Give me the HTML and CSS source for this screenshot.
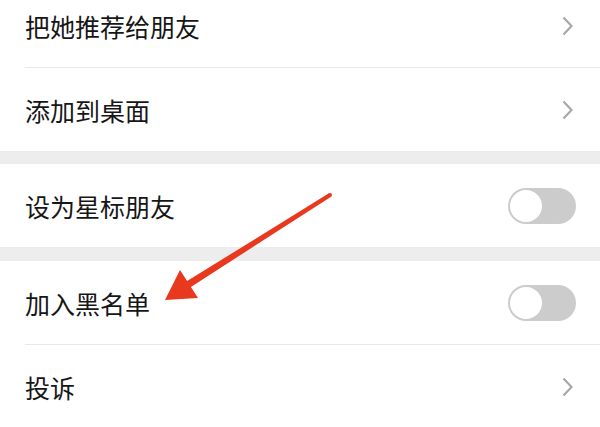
FILE: index.html
```html
<!DOCTYPE html>
<html lang="zh-CN">
<head>
<meta charset="utf-8">
<link rel="stylesheet" href="styles.css">
</head>
<body>
<div class="page">
  <div class="group">
    <div class="row first"><span class="label">把她推荐给朋友</span><svg class="chev" viewBox="0 0 11 20"><path d="M1.5 1.5 L9.5 10 L1.5 18.5" fill="none" stroke="#a8a8a8" stroke-width="2.2"/></svg></div>
    <div class="row divided"><span class="label">添加到桌面</span><svg class="chev" viewBox="0 0 11 20"><path d="M1.5 1.5 L9.5 10 L1.5 18.5" fill="none" stroke="#a8a8a8" stroke-width="2.2"/></svg></div>
  </div>
  <div class="band"></div>
  <div class="group">
    <div class="row"><span class="label">设为星标朋友</span><span class="toggle"><span class="knob"></span></span></div>
  </div>
  <div class="band b2"></div>
  <div class="group">
    <div class="row"><span class="label">加入黑名单</span><span class="toggle"><span class="knob"></span></span></div>
    <div class="row divided"><span class="label">投诉</span><svg class="chev" viewBox="0 0 11 20"><path d="M1.5 1.5 L9.5 10 L1.5 18.5" fill="none" stroke="#a8a8a8" stroke-width="2.2"/></svg></div>
  </div>
  <svg class="arrow" viewBox="0 0 600 427" width="600" height="427">
    <polygon fill="#e8381e" points="328.9,193.3 187.1,281.1 180,270 165,300 198,298 190.9,286.9 331.1,196.7"/>
    <circle cx="330" cy="195" r="2" fill="#e8381e"/>
  </svg>
</div>
</body>
</html>
```

FILE: styles.css
```css
html, body {
  margin: 0;
  padding: 0;
  background: #ffffff;
}
body {
  width: 600px;
  height: 427px;
  overflow: hidden;
  font-family: "Noto Sans CJK SC", "Noto Sans", sans-serif;
}
.page {
  position: relative;
  margin-top: -15px;
}
.group {
  background: #ffffff;
}
.row {
  height: 83px;
  display: flex;
  align-items: center;
  justify-content: space-between;
  padding: 0 24px 0 25px;
  position: relative;
}
.row.first {
  height: 82px;
}
.row.divided::before {
  content: "";
  position: absolute;
  left: 25px;
  right: 0;
  top: -1px;
  height: 1px;
  background: #e9e9e9;
}
.row.divided {
  margin-top: 1px;
}
.label {
  font-size: 25px;
  color: #161616;
  letter-spacing: 0;
  line-height: 1;
  padding-top: 1px;
}
.chev {
  width: 11px;
  height: 20px;
  margin-right: 3px;
}
.band {
  height: 13px;
  background: #ededed;
}
.band.b2 {
  height: 14px;
}
.toggle {
  width: 68px;
  height: 36px;
  border-radius: 18px;
  background: #cccccc;
  display: flex;
  align-items: center;
  padding: 0 2px;
  box-sizing: border-box;
}
.knob {
  width: 32px;
  height: 32px;
  border-radius: 50%;
  background: #ffffff;
}
.arrow {
  position: absolute;
  left: 0;
  top: 15px;
  pointer-events: none;
}
```
